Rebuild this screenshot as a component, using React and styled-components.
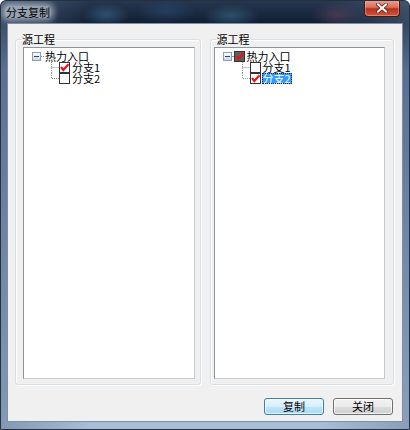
import React from "react";
import styled, { createGlobalStyle } from "styled-components";

const GlobalStyle = createGlobalStyle`
  html, body {
    margin: 0;
    padding: 0;
    background: #ffffff;
  }
  body {
    font-family: "Noto Sans CJK SC", "Liberation Sans", sans-serif;
  }
`;

const Window = styled.div`
  width: 410px;
  height: 430px;
  box-sizing: border-box;
  display: flex;
  flex-direction: column;
  padding: 0 6px 7px 6px;
  border: 1px solid #27303c;
  border-radius: 6px 6px 0 0;
  background:
    radial-gradient(ellipse 24px 12px at 105px 14px, rgba(70, 120, 160, 0.5), transparent),
    radial-gradient(ellipse 30px 12px at 165px 10px, rgba(50, 90, 140, 0.4), transparent),
    radial-gradient(ellipse 28px 12px at 230px 15px, rgba(70, 130, 165, 0.45), transparent),
    radial-gradient(ellipse 26px 12px at 335px 14px, rgba(140, 80, 100, 0.35), transparent),
    linear-gradient(to right, rgba(100, 120, 150, 0.55), transparent 22%, transparent 78%, rgba(100, 120, 150, 0.45)),
    linear-gradient(to bottom, #25364f 0px, #121f33 22px, #4a6890 70px, #7c97b7 250px, #a9bfd8 430px);
  overflow: hidden;
`;

const TitleBar = styled.div`
  display: flex;
  align-items: flex-start;
  justify-content: space-between;
  height: 22px;
  margin: 0 -6px;
  padding-left: 4px;
`;

const Title = styled.span`
  margin-top: 5px;
  padding: 0 1px;
  font-size: 11px;
  line-height: 12px;
  color: #000000;
  background: rgba(225, 232, 240, 0.55);
  box-shadow: 0 0 6px 3px rgba(225, 232, 240, 0.55);
  border-radius: 4px;
`;

const CloseButton = styled.div`
  display: flex;
  align-items: center;
  justify-content: center;
  width: 36px;
  height: 17px;
  box-sizing: border-box;
  margin: -1px 9px 0 0;
  border: 1px solid #4a1610;
  border-top: none;
  border-radius: 0 0 4px 4px;
  background: linear-gradient(to bottom, #e9a795 0%, #d8705c 45%, #b8321e 55%, #d2553c 100%);
  box-shadow: inset 0 0 0 1px rgba(255, 200, 190, 0.4);
`;

const Client = styled.div`
  flex: 1;
  display: flex;
  flex-direction: column;
  border: 1px solid #7d8fa6;
  background: #f0f0f0;
  padding: 9px 8px 6px 7px;
`;

const GroupRow = styled.div`
  display: flex;
  gap: 9px;
  height: 352px;
`;

const Group = styled.fieldset`
  flex: 1;
  min-width: 0;
  margin: 0;
  padding: 0 ${(p) => p.$padR}px 5px ${(p) => p.$padL}px;
  display: flex;
  flex-direction: column;
  border: 1px solid #d5dfe5;
  border-radius: 3px;
  box-shadow: inset 1px 1px 0 #ffffff, 1px 1px 0 #ffffff;
`;

const Legend = styled.legend`
  margin-left: ${(p) => p.$offset}px;
  padding: 0 1px;
  font-size: 11px;
  line-height: 12px;
  color: #000000;
`;

const TreePanel = styled.div`
  flex: 1;
  margin-top: 2px;
  padding-top: 2px;
  background: #ffffff;
  border: 1px solid #8e949b;
  border-right-color: #c6cad0;
  border-bottom-color: #c6cad0;
`;

const Row = styled.div`
  display: flex;
  align-items: center;
  height: ${(p) => p.$h}px;
  padding-left: ${(p) => p.$indent}px;
`;

const Dots = styled.span`
  width: ${(p) => p.$w}px;
  height: 0;
  border-top: 1px dotted #8a8a8a;
`;

const Label = styled.span`
  display: block;
  height: 11px;
  padding: 0 1px;
  margin-left: ${(p) => p.$gap || 0}px;
  font-size: 11px;
  line-height: 11px;
  white-space: nowrap;
  color: ${(p) => (p.$selected ? "#ffffff" : "#000000")};
  background: ${(p) => (p.$selected ? "#3399ff" : "transparent")};
  outline: ${(p) => (p.$selected ? "1px dotted #0b2a55" : "none")};
  outline-offset: -1px;
`;

const ButtonRow = styled.div`
  display: flex;
  justify-content: flex-end;
  gap: 9px;
  margin-top: 13px;
  padding-right: 1px;
`;

const Button = styled.button`
  width: 60px;
  height: 17px;
  padding: 0;
  font-family: inherit;
  font-size: 11px;
  line-height: 11px;
  color: #000000;
  border-radius: 3px;
  border: 1px solid ${(p) => (p.$default ? "#3c7fb1" : "#707070")};
  background: ${(p) =>
    p.$default
      ? "linear-gradient(to bottom, #eaf6fd 0%, #d9f0fc 50%, #bee6fd 51%, #a7d9f5 100%)"
      : "linear-gradient(to bottom, #f2f2f2 0%, #ebebeb 50%, #dddddd 51%, #cfcfcf 100%)"};
  box-shadow: inset 0 0 0 1px rgba(255, 255, 255, 0.7);
`;

function CloseGlyph() {
  return (
    <svg width="12" height="10" viewBox="0 0 12 10">
      <path d="M2 1.5 L10 8.5 M10 1.5 L2 8.5" stroke="#5a2218" strokeWidth="3.6" strokeLinecap="square" />
      <path d="M2 1.5 L10 8.5 M10 1.5 L2 8.5" stroke="#ffffff" strokeWidth="2" strokeLinecap="square" />
    </svg>
  );
}

function Expander() {
  return (
    <svg width="9" height="9" viewBox="0 0 9 9">
      <defs>
        <linearGradient id="exp" x1="0" y1="0" x2="0" y2="1">
          <stop offset="0" stopColor="#ffffff" />
          <stop offset="1" stopColor="#c9d5e3" />
        </linearGradient>
      </defs>
      <rect x="0.5" y="0.5" width="8" height="8" fill="url(#exp)" stroke="#8d9db3" />
      <path d="M2 4.5 H7" stroke="#23467a" />
    </svg>
  );
}

function Check({ checked, dark }) {
  return (
    <svg width="11" height="11" viewBox="0 0 11 11">
      <rect x="0.5" y="0.5" width="10" height="10" fill={dark ? "#5e5e5e" : "#ffffff"} stroke="#333333" />
      {checked && (
        <path d="M2 5 L4.3 8 L9.5 2.2" fill="none" stroke="#e8141c" strokeWidth="2.1" />
      )}
    </svg>
  );
}

function Guide({ last }) {
  return (
    <svg width="11" height="11" viewBox="0 0 11 11">
      <path
        d={last ? "M3.5 0 V5.5 H11" : "M3.5 0 V11 M3.5 5.5 H11"}
        fill="none"
        stroke="#8f8f8f"
        strokeDasharray="1 1"
      />
    </svg>
  );
}

function Tree({ rootCheck, items }) {
  return (
    <TreePanel>
      <Row $h={12} $indent={8}>
        <Expander />
        {rootCheck ? (
          <>
            <Dots $w={2} />
            <Check checked dark />
            <Label $gap={1}>热力入口</Label>
          </>
        ) : (
          <>
            <Dots $w={3} />
            <Label>热力入口</Label>
          </>
        )}
      </Row>
      {items.map((c, i) => (
        <Row key={c.label} $h={11} $indent={24}>
          <Guide last={i === items.length - 1} />
          <Check checked={c.checked} />
          <Label $gap={1} $selected={c.selected}>
            {c.label}
          </Label>
        </Row>
      ))}
    </TreePanel>
  );
}

export default function App() {
  return (
    <>
      <GlobalStyle />
      <Window>
        <TitleBar>
          <Title>分支复制</Title>
          <CloseButton>
            <CloseGlyph />
          </CloseButton>
        </TitleBar>
        <Client>
          <GroupRow>
            <Group $padL={7} $padR={5}>
              <Legend $offset={-2}>源工程</Legend>
              <Tree
                items={[
                  { label: "分支1", checked: true },
                  { label: "分支2", checked: false },
                ]}
              />
            </Group>
            <Group $padL={3} $padR={8}>
              <Legend $offset={2}>源工程</Legend>
              <Tree
                rootCheck
                items={[
                  { label: "分支1", checked: false },
                  { label: "分支2", checked: true, selected: true },
                ]}
              />
            </Group>
          </GroupRow>
          <ButtonRow>
            <Button $default>复制</Button>
            <Button>关闭</Button>
          </ButtonRow>
        </Client>
      </Window>
    </>
  );
}
